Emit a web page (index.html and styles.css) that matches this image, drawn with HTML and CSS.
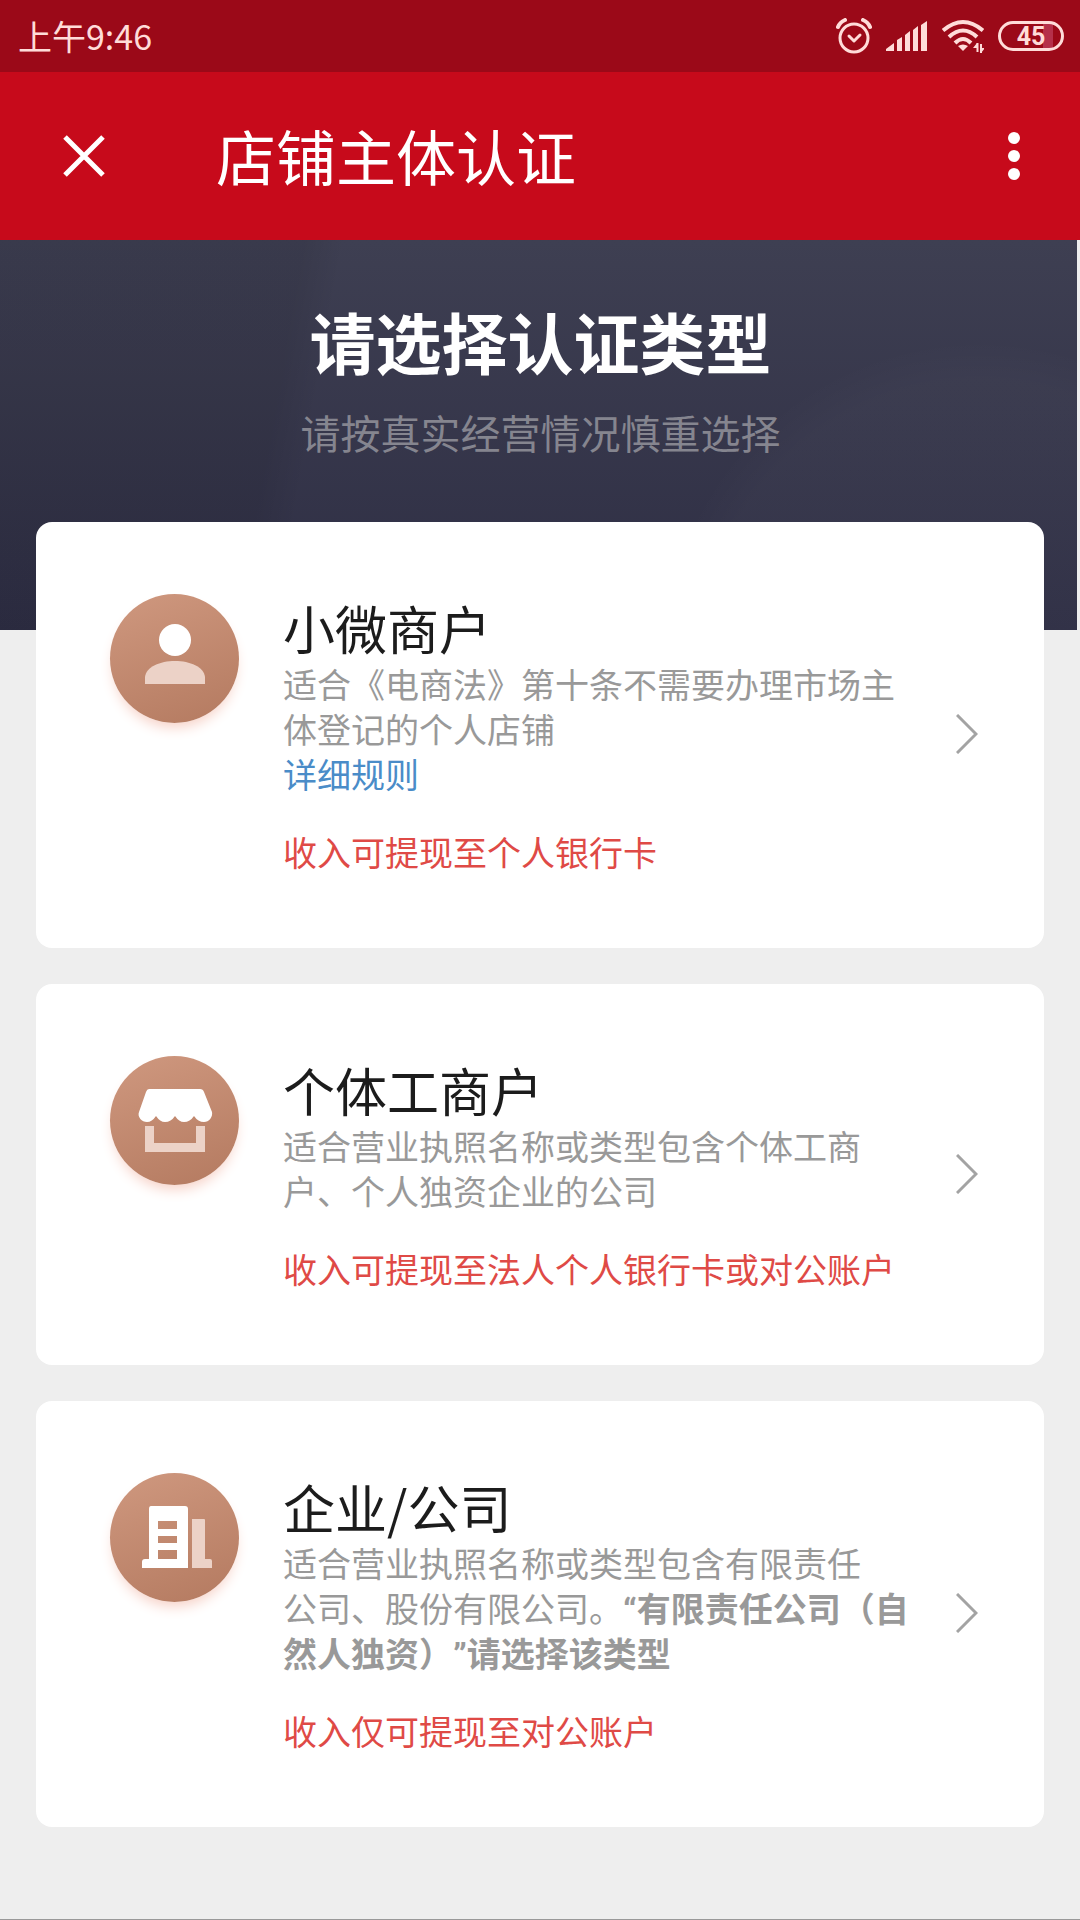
FILE: index.html
```html
<!DOCTYPE html>
<html lang="zh-CN">
<head>
<meta charset="utf-8">
<meta name="viewport" content="width=device-width, initial-scale=1">
<title>店铺主体认证</title>
<link rel="stylesheet" href="styles.css">
</head>
<body>
<div class="page">
  <div class="status">
    <span class="status-time">上午9:46</span>
    <div class="status-icons">
      <svg class="ico-alarm" viewBox="0 0 36 36" width="36" height="36" fill="none" stroke="currentColor" stroke-width="3" stroke-linecap="round" stroke-linejoin="round">
        <circle cx="18" cy="20" r="14"/>
        <path d="M13 18l5 5 6-6"/>
        <path d="M2 9q2-5 7-7M34 9q-2-5-7-7" stroke-width="4"/>
      </svg>
      <svg class="ico-signal" viewBox="0 0 42 30" width="42" height="30" fill="currentColor">
        <path d="M0 30v-2l8-6v8zM11 30V19l5-3v14zM19 30V14l5-4v20zM27 30V9l5-4v25zM35 30V4l6-4v30z"/>
      </svg>
      <svg class="ico-wifi" viewBox="0 0 42 34" width="42" height="34" fill="none" stroke="currentColor" stroke-width="4">
        <path d="M1 11.500q20-17 40 0M7 18q14-13 28 0M13 24q8-8 16 0"/>
        <path d="M16 27q5-3 10 0l-5 5z" fill="currentColor" stroke="none"/>
        <path d="M35.500 24v9M39 25v9" stroke-width="2"/>
        <path d="M31 29l4-5v5zM43 29l-4 5v-5z" fill="currentColor" stroke="none"/>
      </svg>
      <span class="battery">45</span>
    </div>
  </div>

  <header class="bar">
    <button class="bar-btn" type="button" aria-label="关闭">
      <svg viewBox="0 0 42 42" width="42" height="42" fill="none" stroke="currentColor" stroke-width="5"><path d="M2 2l38 38M40 2L2 40"/></svg>
    </button>
    <h1 class="bar-title">店铺主体认证</h1>
    <button class="bar-btn" type="button" aria-label="更多">
      <svg viewBox="0 0 12 48" width="12" height="48" fill="currentColor"><circle cx="6" cy="6" r="6"/><circle cx="6" cy="24" r="6"/><circle cx="6" cy="42" r="6"/></svg>
    </button>
  </header>

  <section class="hero">
    <h2 class="hero-title">请选择认证类型</h2>
    <p class="hero-sub">请按真实经营情况慎重选择</p>
  </section>

  <main class="cards">
    <article class="card">
      <div class="badge">
        <svg viewBox="0 0 129 129" width="129" height="129">
          <circle cx="65" cy="46" r="16" fill="#fff"/>
          <path d="M35 90V83C36 73 50 67 65 67S94 73 95 83V90z" fill="#ecd2c7"/>
        </svg>
      </div>
      <div class="info">
        <h3 class="name">小微商户</h3>
        <p class="desc">适合《电商法》第十条不需要办理市场主<br>体登记的个人店铺</p>
        <a class="rules" href="#rules">详细规则</a>
        <p class="note">收入可提现至个人银行卡</p>
      </div>
      <button class="go" type="button" aria-label="选择小微商户">
        <svg viewBox="0 0 22 40" width="22" height="40" fill="none" stroke="currentColor" stroke-width="3"><path d="M1 1l19 19L1 39"/></svg>
      </button>
    </article>

    <article class="card">
      <div class="badge">
        <svg viewBox="0 0 129 129" width="129" height="129">
          <path d="M35 70h9v17h42V70h9v26H35z" fill="#ecd2c7"/>
          <path d="M39 33h51q3 0 4 3l8 20c1 5-3 10-8 10q-6 0-10-6-4 6-10 6-5 0-9-6-4 6-10 6-5 0-9-6-4 6-9 6c-5 0-10-5-8-10l7-20q1-3 3-3z" fill="#fff"/>
        </svg>
      </div>
      <div class="info">
        <h3 class="name">个体工商户</h3>
        <p class="desc">适合营业执照名称或类型包含个体工商<br>户、个人独资企业的公司</p>
        <p class="note">收入可提现至法人个人银行卡或对公账户</p>
      </div>
      <button class="go" type="button" aria-label="选择个体工商户">
        <svg viewBox="0 0 22 40" width="22" height="40" fill="none" stroke="currentColor" stroke-width="3"><path d="M1 1l19 19L1 39"/></svg>
      </button>
    </article>

    <article class="card">
      <div class="badge">
        <svg viewBox="0 0 129 129" width="129" height="129">
          <path d="M82 46h12q1 0 1 1v39h5q2 0 2 2v7H82z" fill="#ecd2c7"/>
          <path fill-rule="evenodd" d="M41 33h34q3 0 3 3v59H32v-6q0-3 3-3h4V36q0-3 2-3zM48 48v8h19v-8zM48 63v7h19v-7zM48 77v9h19v-9z" fill="#fff"/>
        </svg>
      </div>
      <div class="info">
        <h3 class="name">企业/公司</h3>
        <p class="desc">适合营业执照名称或类型包含有限责任<br>公司、股份有限公司。<strong><span class="quote">“</span>有限责任公司（自<br>然人独资）<span class="quote">”</span>请选择该类型</strong></p>
        <p class="note">收入仅可提现至对公账户</p>
      </div>
      <button class="go" type="button" aria-label="选择企业/公司">
        <svg viewBox="0 0 22 40" width="22" height="40" fill="none" stroke="currentColor" stroke-width="3"><path d="M1 1l19 19L1 39"/></svg>
      </button>
    </article>
  </main>
</div>
</body>
</html>
```
FILE: styles.css
```css
* {
  box-sizing: border-box;
  margin: 0;
  padding: 0;
}

body {
  background: #eee;
  font-family: "Noto Sans CJK SC", sans-serif;
  font-weight: 400;
}

button {
  display: flex;
  align-items: center;
  justify-content: center;
  border: 0;
  background: none;
  color: inherit;
  font: inherit;
  cursor: pointer;
}

svg {
  display: block;
}

.page {
  min-height: 100vh;
  border-bottom: 1px solid #999;
}

.status {
  display: flex;
  align-items: center;
  justify-content: space-between;
  height: 72px;
  padding: 0 16px 0 18px;
  background: #9b0918;
  color: #ffdcd9;
}

.status-time {
  font-size: 34px;
  line-height: 72px;
}

.status-icons {
  display: flex;
  align-items: center;
  gap: 14px;
}

.battery {
  width: 66px;
  height: 30px;
  border: 3px solid currentColor;
  border-radius: 15px;
  background: linear-gradient(90deg, transparent 42px, #b5304a 42px, #b5304a 52px, transparent 52px);
  font-family: Roboto, sans-serif;
  font-size: 25px;
  font-weight: 700;
  line-height: 25px;
  text-align: center;
}

.bar {
  display: flex;
  align-items: center;
  height: 168px;
  padding: 0 42px;
  background: #c70a1b;
  color: #fff;
}

.bar-btn {
  width: 84px;
  height: 84px;
}

.bar-btn:last-child {
  width: 48px;
}

.bar-title {
  flex: 1;
  padding: 0 0 2px 90px;
  font-size: 60px;
  font-weight: 400;
  line-height: 84px;
}

.hero {
  margin-right: 3px;
  padding: 60px 16px 168px 20px;
  background:
    radial-gradient(circle at 980px 420px, rgba(255, 255, 255, 0.02) 280px, transparent 320px),
    linear-gradient(100deg, rgba(0, 0, 0, 0.08) 300px, transparent 340px),
    linear-gradient(#3e3f52, #2e2e44);
  text-align: center;
}

.hero-title {
  color: #fff;
  font-size: 66px;
  font-weight: 700;
  line-height: 80px;
}

.hero-sub {
  margin-top: 22px;
  color: #85858f;
  font-size: 40px;
  line-height: 60px;
}

.cards {
  display: grid;
  gap: 36px;
  margin-top: -108px;
  padding: 0 36px 92px;
}

.card {
  display: flex;
  align-items: flex-start;
  padding: 72px 66px 74px 74px;
  border-radius: 16px;
  background: #fff;
}

.badge {
  flex: none;
  border-radius: 50%;
  background: linear-gradient(160deg, #cf987f, #b47a60);
  box-shadow: 0 8px 14px -4px #f6cfc4;
}

.info {
  flex: 1;
  padding-left: 44px;
  font-size: 34px;
  line-height: 45px;
  text-spacing-trim: space-all;
  white-space: nowrap;
}

.name {
  color: #1c1c1c;
  font-size: 52px;
  font-weight: 400;
  line-height: 67px;
}

.desc {
  color: #999;
}

.desc strong {
  font-weight: 700;
}

.quote {
  font-family: Roboto, sans-serif;
  line-height: 1;
}

.rules {
  color: #4a8cc8;
  text-decoration: none;
}

.note {
  margin-top: 33px;
  color: #df4a46;
}

.go {
  flex: none;
  align-self: center;
  color: #a3a3a3;
}
```
